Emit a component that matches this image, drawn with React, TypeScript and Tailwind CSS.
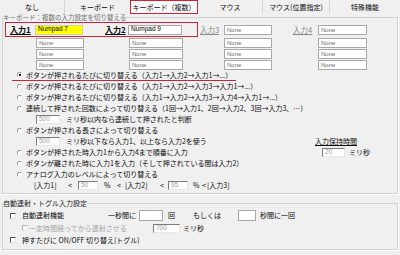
import React from 'react';

type FieldKind = 'none' | 'yellow' | 'value' | 'sunken';

const fieldKinds: Record<FieldKind, string> = {
  none: 'bg-white border border-[#a8a8a8] text-[6px] text-[#6a6a6a]',
  yellow: 'bg-[#ffff00] border border-[#d4d4a0] text-[6.5px] text-black',
  value: 'bg-white border border-[#a8a8a8] text-[6.5px] text-black',
  sunken:
    'bg-white border border-t-[#7c7c7c] border-l-[#7c7c7c] border-r-[#e8e8e8] border-b-[#e8e8e8] text-[6.5px] text-[#a0a0a0]',
};

function Field({ className = '', kind = 'none', children }: { className?: string; kind?: FieldKind; children?: React.ReactNode }) {
  return (
    <div
      className={`shrink-0 flex items-center px-[2px] whitespace-nowrap overflow-hidden leading-none font-['Liberation_Sans',sans-serif] ${fieldKinds[kind]} ${className}`}
    >
      {children}
    </div>
  );
}

function Radio({ checked = false }: { checked?: boolean }) {
  return (
    <svg width="6" height="6" viewBox="0 0 12 12" className="shrink-0">
      <circle cx="6" cy="6" r="5.2" fill="#fff" />
      <path d="M1.3 8.5A5.2 5.2 0 0 1 8.5 1.3" fill="none" stroke="#666" strokeWidth="1.6" />
      <path d="M10.7 3.5A5.2 5.2 0 0 1 3.5 10.7" fill="none" stroke="#e2e2e2" strokeWidth="1.6" />
      {checked && <circle cx="6" cy="6" r="2.3" fill="#111" />}
    </svg>
  );
}

function Check({ dim = false }: { dim?: boolean }) {
  return (
    <span
      className={`shrink-0 w-[6px] h-[6px] bg-[#f8f8f8] border ${
        dim
          ? 'border-t-[#b4b4b4] border-l-[#b4b4b4] border-r-[#ececec] border-b-[#ececec]'
          : 'border-t-[#555] border-l-[#555] border-r-[#e6e6e6] border-b-[#e6e6e6]'
      }`}
    />
  );
}

function RadioRow({ children, checked }: { children: React.ReactNode; checked?: boolean }) {
  return (
    <div className="h-[11px] flex items-center pl-[14px] gap-[3px] whitespace-nowrap">
      <Radio checked={checked} />
      <span>{children}</span>
    </div>
  );
}

const tabs = [
  { label: 'なし', cls: 'w-[65px] border-r border-[#d6d6d6]' },
  { label: 'キーボード', cls: 'w-[65px]' },
  { label: 'キーボード（複数）', cls: 'w-[68px] border-[1.5px] border-[#d0213a] bg-[#f9f9f9]' },
  { label: 'マウス', cls: 'w-[65px] border-r border-[#d6d6d6]' },
  { label: 'マウス(位置指定)', cls: 'w-[67px] border-r border-[#d6d6d6]' },
  { label: '特殊機能', cls: 'w-[70px]' },
];

export default function App() {
  return (
    <div className="w-[400px] h-[255px] overflow-hidden bg-[#f0f0f0] text-[#0a0a0a] text-[7px] leading-none font-['Noto_Sans_CJK_JP',sans-serif]">
      {/* tabs */}
      <div className="flex h-[14px]">
        {tabs.map((t) => (
          <div key={t.label} className={`flex items-center justify-center whitespace-nowrap ${t.cls}`}>
            {t.label}
          </div>
        ))}
      </div>

      {/* keyboard (multiple) group */}
      <fieldset className="mx-[2px] h-[180px] border border-[#d2d2d2] shadow-[1px_1px_0_#fff]">
        <legend className="h-[7px] leading-[7px] text-[6.5px] text-[#6e6e6e] whitespace-nowrap">
          キーボード：複数の入力設定を切り替える
        </legend>

        <div className="mt-[1px] flex items-center h-[15px]">
          <div className="ml-[2px] w-[193px] h-[15px] border-[1.5px] border-[#d0213a] flex items-center pl-[4px]">
            <span className="w-[25px] text-[8px] font-bold underline">入力1</span>
            <Field kind="yellow" className="w-[48px] h-[10px]">Numpad 7</Field>
            <span className="w-[22px]" />
            <span className="w-[23px] text-[8px] font-bold underline">入力2</span>
            <Field kind="value" className="w-[54px] h-[10px]">Numpad 9</Field>
          </div>
          <span className="ml-[2px] w-[24px] text-[7.5px] text-[#888] underline">入力3</span>
          <Field className="w-[48px] h-[10px]">None</Field>
          <span className="ml-[21px] w-[25px] text-[7.5px] text-[#888] underline">入力4</span>
          <Field className="w-[49px] h-[10px]">None</Field>
        </div>

        <div className="mt-[1px] flex flex-col gap-[1px]">
          {[0, 1, 2].map((i) => (
            <div key={i} className="flex h-[10px]">
              <Field className="ml-[33px] w-[48px]">None</Field>
              <Field className="ml-[45px] w-[54px]">None</Field>
              <Field className="ml-[41px] w-[48px]">None</Field>
              <Field className="ml-[46px] w-[49px]">None</Field>
            </div>
          ))}
        </div>

        <div className="ml-[9px] w-[224px] h-[11px] flex items-center pl-[5px] gap-[3px] whitespace-nowrap border-b-[1.5px] border-[#d0213a]">
          <Radio checked />
          <span>ボタンが押されるたびに切り替える（入力1→入力2→入力1→...）</span>
        </div>
        <RadioRow>ボタンが押されるたびに切り替える（入力1→入力2→入力3→入力1→...）</RadioRow>
        <RadioRow>ボタンが押されるたびに切り替える（入力1→入力2→入力3→入力4→入力1→...）</RadioRow>
        <RadioRow>連続して押された回数によって切り替える（1回→入力1、2回→入力2、3回→入力3、…）</RadioRow>
        <div className="h-[11px] flex items-center pl-[33px] whitespace-nowrap">
          <Field kind="sunken" className="w-[24px] h-[9px]">500</Field>
          <span className="ml-[6px]">ミリ秒以内なら連続して押されたと判断</span>
        </div>
        <RadioRow>ボタンが押される長さによって切り替える</RadioRow>
        <div className="h-[11px] flex items-center whitespace-nowrap">
          <div className="w-[312px] flex items-center pl-[33px]">
            <Field kind="sunken" className="w-[24px] h-[9px]">500</Field>
            <span className="ml-[6px]">ミリ秒以下なら入力1、以上なら入力2を使う</span>
          </div>
          <span className="underline">入力保持時間</span>
        </div>
        <div className="h-[11px] flex items-center whitespace-nowrap">
          <div className="w-[319px] flex items-center pl-[14px] gap-[3px]">
            <Radio />
            <span>ボタンが押された時入力1から入力4まで順番に入力</span>
          </div>
          <Field kind="sunken" className="w-[23px] h-[9px]">20</Field>
          <span className="ml-[4px]">ミリ秒</span>
        </div>
        <RadioRow>ボタンが離された時に入力1を入力（そして押されている間は入力2）</RadioRow>
        <RadioRow>アナログ入力のレベルによって切り替える</RadioRow>
        <div className="h-[11px] flex items-center pl-[31px] whitespace-nowrap">
          <span className="w-[34px]">[入力1]</span>
          <span className="w-[10px]">&lt;</span>
          <Field kind="sunken" className="w-[20px] h-[9px]">50</Field>
          <span className="ml-[6px] w-[13px]">%</span>
          <span className="w-[8px]">&lt;</span>
          <span className="w-[35px]">[入力2]</span>
          <span className="w-[8px]">&lt;</span>
          <Field kind="sunken" className="w-[20px] h-[9px]">95</Field>
          <span className="ml-[5px] w-[9px]">%</span>
          <span className="w-[5px]">&lt;</span>
          <span>[入力3]</span>
        </div>
      </fieldset>

      {/* auto-fire / toggle group */}
      <fieldset className="mx-[2px] mt-[5px] h-[51px] border border-[#d2d2d2] shadow-[1px_1px_0_#fff]">
        <legend className="h-[8px] leading-[8px] text-[7px] text-[#1a1a1a] whitespace-nowrap">
          自動連射・トグル入力設定
        </legend>
        <div className="mt-[2px] h-[13px] flex items-center pl-[7px] whitespace-nowrap">
          <Check />
          <span className="ml-[6px] w-[86px]">自動連射機能</span>
          <span className="w-[31px]">一秒間に</span>
          <Field kind="value" className="w-[24px] h-[11px]" />
          <span className="ml-[5px] w-[25px]">回</span>
          <span className="w-[45px]">もしくは</span>
          <Field kind="value" className="w-[18px] h-[11px]" />
          <span className="ml-[4px]">秒間に一回</span>
        </div>
        <div className="h-[12px] flex items-center pl-[19px] whitespace-nowrap">
          <Check dim />
          <span className="ml-[1px] w-[124px] text-[#a6a6a6]">一定時間経ってから連射させる</span>
          <Field kind="sunken" className="w-[27px] h-[9px]">700</Field>
          <span className="ml-[3px]">ミリ秒</span>
        </div>
        <div className="h-[12px] flex items-center pl-[7px] whitespace-nowrap">
          <Check />
          <span className="ml-[6px]">押すたびに ON/OFF 切り替え(トグル)</span>
        </div>
      </fieldset>
    </div>
  );
}
